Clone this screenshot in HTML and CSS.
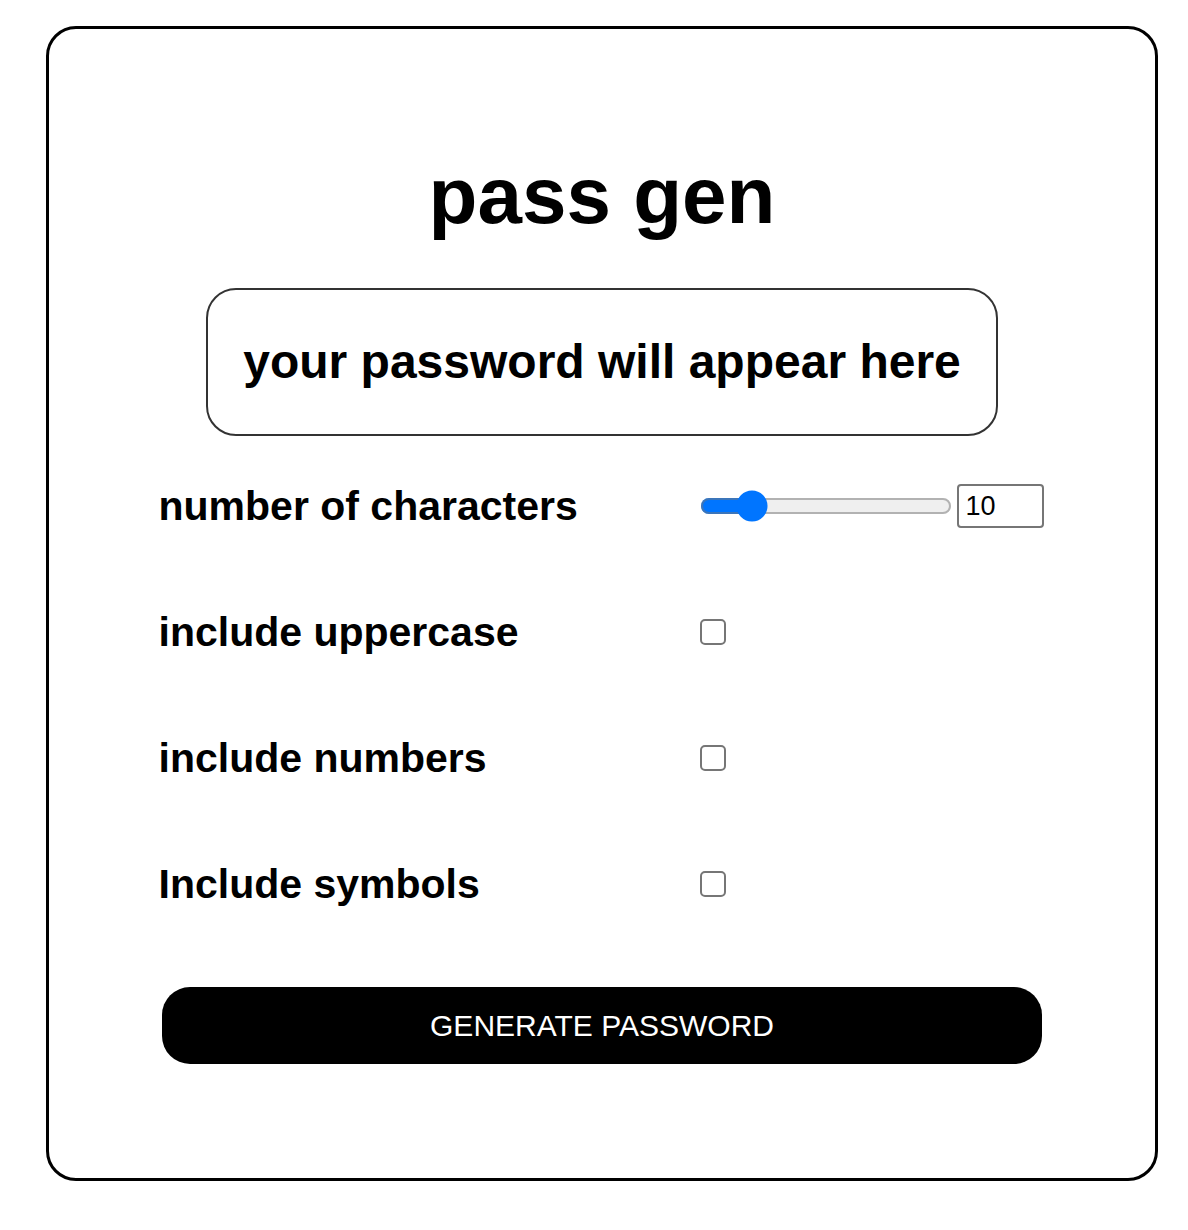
FILE: index.html
```html
<!DOCTYPE html>
<html lang="en">

<head>
  <meta charset="UTF-8" />
  <title>pass gen</title>
  <link rel="stylesheet" href="styles.css">
</head>

<body>
  <div class="card">
    <h1>pass gen</h1>

    <div class="output-wrap">
      <p class="output" id="output">your password will appear here</p>
    </div>

    <div class="options">
      <div class="row">
        <label for="length">number of characters</label>
        <div class="length-controls">
          <input type="range" id="length" min="4" max="40" value="10" />
          <input type="number" id="lengthNum" class="num" min="4" max="40" value="10" />
        </div>
      </div>
      <div class="row">
        <label for="upper">include uppercase</label>
        <input type="checkbox" id="upper" />
      </div>
      <div class="row">
        <label for="numbers">include numbers</label>
        <input type="checkbox" id="numbers" />
      </div>
      <div class="row">
        <label for="symbols">Include symbols</label>
        <input type="checkbox" id="symbols" />
      </div>
    </div>

    <button type="button" class="btn-generate" id="generate">GENERATE PASSWORD</button>
  </div>

  <script>
    const range = document.getElementById('length');
    const num = document.getElementById('lengthNum');
    range.addEventListener('input', () => num.value = range.value);
    num.addEventListener('input', () => range.value = num.value);

    document.getElementById('generate').addEventListener('click', function () {
      let chars = 'abcdefghijklmnopqrstuvwxyz';
      if (document.getElementById('upper').checked) chars += 'ABCDEFGHIJKLMNOPQRSTUVWXYZ';
      if (document.getElementById('numbers').checked) chars += '0123456789';
      if (document.getElementById('symbols').checked) chars += '!@#$%^&*()_+-=';
      let pass = '';
      for (let i = 0; i < num.value; i++) {
        pass += chars[Math.floor(Math.random() * chars.length)];
      }
      document.getElementById('output').textContent = pass;
    });
  </script>
</body>

</html>
```

FILE: styles.css
```css
body {
  font-family: "Liberation Sans", Arial, sans-serif;
  margin: 0;
  padding: 26px 30px 50px 46px;
  background: #fff;
  color: #000;
}

.card {
  box-sizing: border-box;
  width: 1112px;
  border: 3px solid #000;
  border-radius: 30px;
  padding: 121px 0 114px;
}

h1 {
  font-size: 80px;
  text-align: center;
  margin: 0 0 46px;
}

.output-wrap {
  text-align: center;
}

.output {
  display: inline-block;
  margin: 0;
  padding: 44px 35px 45px;
  border: 2px solid #333;
  border-radius: 30px;
  font-size: 48px;
  font-weight: bold;
}

.options {
  width: 887px;
  margin: 7px auto 0;
}

.row {
  display: grid;
  grid-template-columns: 539px auto;
  align-items: center;
  height: 126px;
}

label {
  font-size: 41px;
  font-weight: bold;
}

.length-controls {
  display: flex;
  align-items: center;
  gap: 3px;
}

input[type="range"] {
  zoom: 2;
  width: 126px;
  margin: 0 1px;
}

input[type="checkbox"] {
  zoom: 2;
  margin: 0 0 0 1px;
  justify-self: start;
}

.num {
  box-sizing: border-box;
  width: 87px;
  height: 44px;
  padding: 0 7px;
  border: 2px solid #767676;
  border-radius: 4px;
  font-family: "Liberation Sans", Arial, sans-serif;
  font-size: 27px;
}

.btn-generate {
  display: block;
  width: 880px;
  height: 77px;
  margin: 40px auto 0;
  background: #000;
  color: #fff;
  border: none;
  border-radius: 28px;
  font-family: "Liberation Sans", Arial, sans-serif;
  font-size: 30px;
  cursor: pointer;
}
```
